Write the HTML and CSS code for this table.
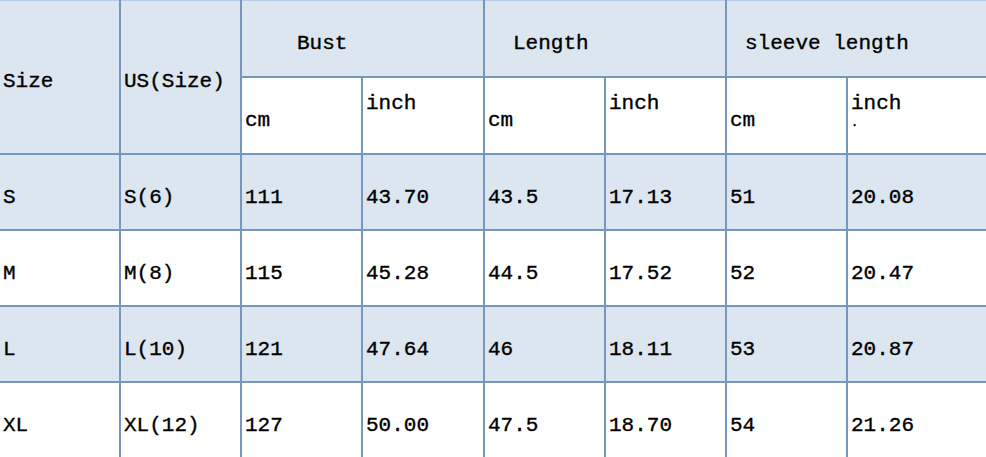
FILE: index.html
```html
<!DOCTYPE html>
<html>
<head>
<meta charset="utf-8">
<link rel="stylesheet" href="styles.css">
</head>
<body>
<table class="sizes">
  <colgroup>
    <col class="c1"><col class="c2"><col class="c3"><col class="c4"><col class="c5"><col class="c6"><col class="c7"><col class="c8">
  </colgroup>
  <tr class="h1">
    <td class="blue mid" rowspan="2">Size</td>
    <td class="blue mid" rowspan="2">US(Size)</td>
    <td class="blue grp g-bust" colspan="2">Bust</td>
    <td class="blue grp g-len" colspan="2">Length</td>
    <td class="blue grp g-sl" colspan="2">sleeve length</td>
  </tr>
  <tr class="h2">
    <td class="unit-cm">cm</td>
    <td class="unit-in">inch</td>
    <td class="unit-cm">cm</td>
    <td class="unit-in">inch</td>
    <td class="unit-cm">cm</td>
    <td class="unit-in">inch<span class="dot">.</span></td>
  </tr>
  <tr class="row blue">
    <td>S</td><td>S(6)</td><td>111</td><td>43.70</td><td>43.5</td><td>17.13</td><td>51</td><td>20.08</td>
  </tr>
  <tr class="row">
    <td>M</td><td>M(8)</td><td>115</td><td>45.28</td><td>44.5</td><td>17.52</td><td>52</td><td>20.47</td>
  </tr>
  <tr class="row blue">
    <td>L</td><td>L(10)</td><td>121</td><td>47.64</td><td>46</td><td>18.11</td><td>53</td><td>20.87</td>
  </tr>
  <tr class="row">
    <td>XL</td><td>XL(12)</td><td>127</td><td>50.00</td><td>47.5</td><td>18.70</td><td>54</td><td>21.26</td>
  </tr>
</table>
</body>
</html>
```
FILE: styles.css
```css
html, body {
  margin: 0;
  padding: 0;
  background: #ffffff;
  overflow: hidden;
}

.sizes {
  border-collapse: collapse;
  table-layout: fixed;
  width: 990px;
  font-family: "Liberation Mono", "DejaVu Sans Mono", monospace;
  font-size: 21px;
  color: #000000;
  -webkit-text-stroke: 0.35px #000000;
  margin-left: -2px;
  margin-top: -1px;
}

.c1 { width: 121px; }
.c2 { width: 121px; }
.c3 { width: 121px; }
.c4 { width: 122px; }
.c5 { width: 121px; }
.c6 { width: 121px; }
.c7 { width: 121px; }
.c8 { width: 142px; }

.sizes td {
  border: 2px solid #7597bd;
  padding: 12px 0 0 3px;
  vertical-align: middle;
  white-space: nowrap;
  overflow: hidden;
  line-height: 24px;
}

.sizes tr:first-child td {
  border-top-color: #b5cbe6;
}

.sizes td:first-child {
  border-left-color: #b5cbe6;
}

.sizes .blue td,
.sizes td.blue {
  background: #dce6f1;
}

.h1 { height: 77px; }
.h2 { height: 77px; }
.row { height: 76px; }

.sizes td.mid {
  padding-top: 10px;
}

.sizes td.grp {
  padding-top: 10px;
}
.sizes td.g-bust { padding-left: 55px; }
.sizes td.g-len { padding-left: 28px; }
.sizes td.g-sl { padding-left: 18px; }

.sizes td.unit-cm {
  padding-top: 10px;
}
.sizes td.unit-in {
  vertical-align: top;
  padding-top: 14px;
}
.dot {
  display: block;
  margin-top: 2px;
  line-height: 10px;
  font-size: 12px;
  height: 10px;
}
```
